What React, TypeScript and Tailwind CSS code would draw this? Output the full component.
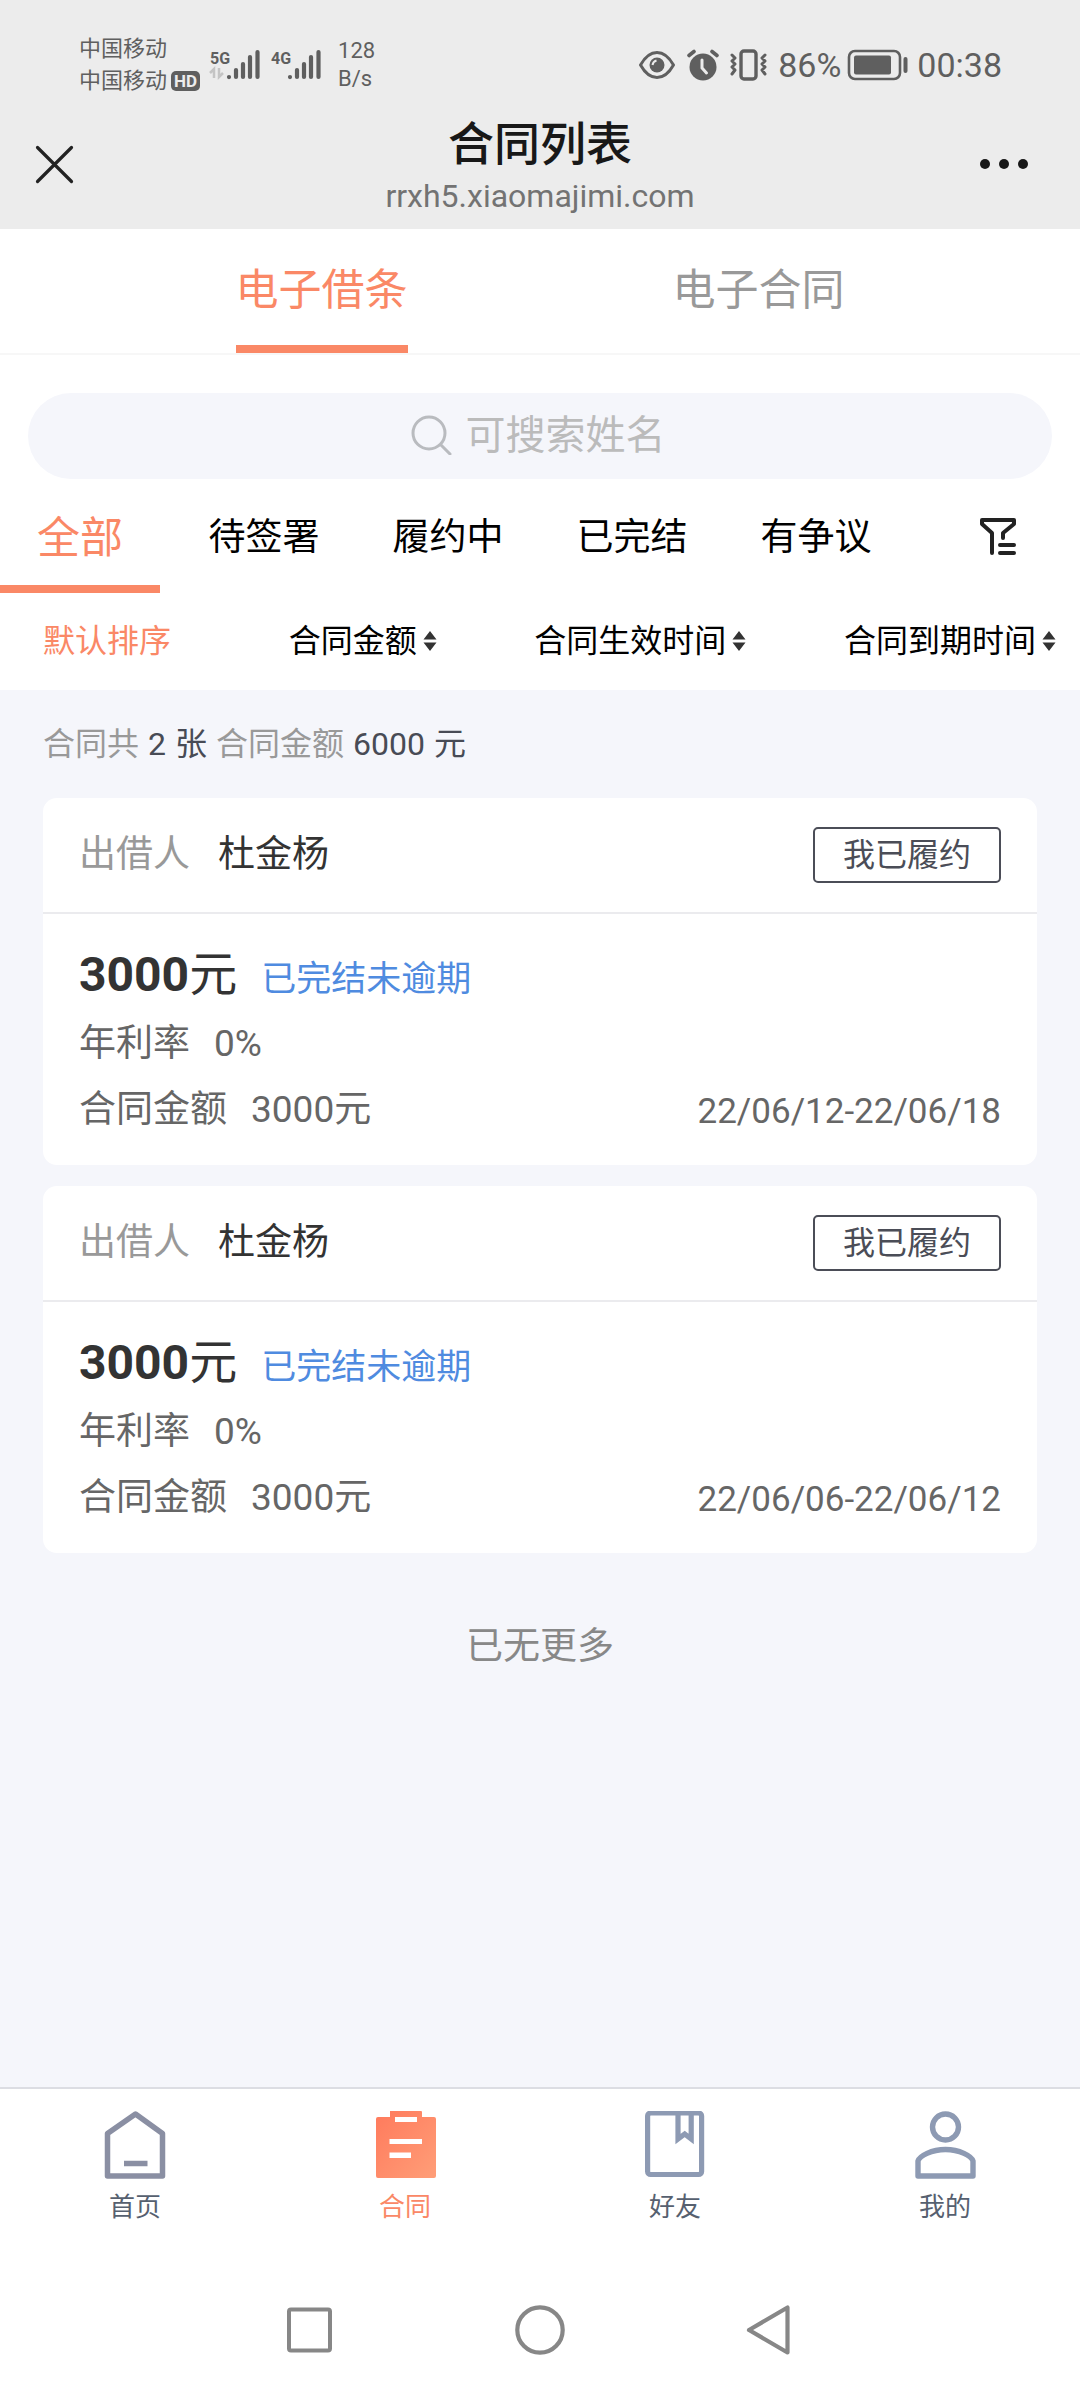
import { useState } from "react";
import type { ReactNode } from "react";

interface Contract {
	id: string;
	lender: string;
	amount: number;
	status: string;
	rate: string;
	period: string;
}

const KINDS = ["电子借条", "电子合同"];
const FILTERS = ["全部", "待签署", "履约中", "已完结", "有争议"];
const SORTS = ["默认排序", "合同金额", "合同生效时间", "合同到期时间"];

const CONTRACTS: Contract[] = [
	{ id: "c1", lender: "杜金杨", amount: 3000, status: "已完结未逾期", rate: "0%", period: "22/06/12-22/06/18" },
	{ id: "c2", lender: "杜金杨", amount: 3000, status: "已完结未逾期", rate: "0%", period: "22/06/06-22/06/12" },
];

export default function App() {
	const [kind, setKind] = useState(KINDS[0]);
	const [filter, setFilter] = useState(FILTERS[0]);
	const [sort, setSort] = useState(SORTS[0]);
	const total = CONTRACTS.reduce((sum, c) => sum + c.amount, 0);

	return (
		<div className="flex min-h-screen flex-col bg-[#f5f6fb] font-['Roboto','Noto_Sans_CJK_SC',sans-serif] text-[#333333]">
			<header className="bg-[#ececec]">
				<StatusBar />
				<TitleBar />
			</header>

			<div className="bg-white">
				<nav className="flex border-b-2 border-[#f7f7f7] px-[103px]">
					{KINDS.map((k) => (
						<div key={k} className="flex flex-1 justify-center">
							<button
								type="button"
								onClick={() => setKind(k)}
								className={`h-[124px] border-b-8 pt-1.5 text-[43px] ${k === kind ? "border-[#fa8866] text-[#fa8866]" : "border-transparent text-[#999999]"}`}
							>
								{k}
							</button>
						</div>
					))}
				</nav>

				<div className="px-7 pt-[38px]">
					<label className="flex h-[86px] items-center justify-center gap-3.5 rounded-full bg-[#f5f6fb] pr-1 pb-1">
						<svg className="size-[41px]" viewBox="0 0 41 41" fill="none" stroke="#b9bbbf" strokeWidth="3" strokeLinecap="round">
							<circle cx="18" cy="19" r="16" />
							<path d="M30 31l9 9" />
						</svg>
						<input
							type="text"
							aria-label="可搜索姓名"
							placeholder="可搜索姓名"
							className="w-[200px] bg-transparent pt-1 text-[40px] leading-[60px] outline-none placeholder:text-[#bbbbbb]"
						/>
					</label>
				</div>

				<div className="flex items-center justify-between pr-[62px]">
					<nav className="flex gap-6">
						{FILTERS.map((f) => (
							<button
								key={f}
								type="button"
								onClick={() => setFilter(f)}
								className={`h-[114px] w-40 border-b-8 pt-3 ${f === filter ? "border-[#fa8866] text-[43px] text-[#fa8866]" : "border-transparent text-[37px] text-black"}`}
							>
								{f}
							</button>
						))}
					</nav>
					<button type="button" aria-label="筛选">
						<svg className="h-[40px] w-[40px]" viewBox="0 0 40 40" fill="none" stroke="#222222" strokeWidth="4" strokeLinecap="round" strokeLinejoin="round">
							<path d="M14 37V17L4 8V4h32v4L25 17v5" />
							<path d="M22 29h14M22 37h14" />
						</svg>
					</button>
				</div>

				<div className="flex h-[97px] items-center justify-between pr-6 pb-0.5 pl-[43px] text-[32px]">
					{SORTS.map((s, i) => (
						<button
							key={s}
							type="button"
							onClick={() => setSort(s)}
							className={`flex items-center gap-1.5 whitespace-nowrap ${s === sort ? "text-[#fa8866]" : "text-black"}`}
						>
							{s}
							<svg className={`h-5 w-3.5 ${i === 0 ? "invisible" : ""}`} viewBox="0 0 14 20" fill="#333333">
								<path d="M7 0l6.500 8.500h-13zM7 20l6.500-8.500h-13z" />
							</svg>
						</button>
					))}
				</div>
			</div>

			<main className="flex-1 px-[43px]">
				<p className="flex h-[108px] items-center gap-[9px] text-[32px] text-[#999999]">
					<span>合同共</span>
					<span className="text-[#484b55]">{CONTRACTS.length}</span>
					<span className="text-[#484b55]">张</span>
					<span>合同金额</span>
					<span className="text-[#484b55]">{total}</span>
					<span className="text-[#484b55]">元</span>
				</p>
				<div className="flex flex-col gap-[21px]">
					{CONTRACTS.map((c) => (
						<ContractCard key={c.id} contract={c} />
					))}
				</div>
				<p className="mt-[66px] text-center text-[37px] leading-[56px] text-[#888888]">已无更多</p>
			</main>

			<footer className="border-t-2 border-[#dcdde3] bg-white">
				<nav className="grid grid-cols-4 pt-[22px]">
					<TabItem label="首页" tone="text-[#56606f]">
						<g fill="none" stroke="#8a8fa3" strokeWidth="5.500" strokeLinejoin="round">
							<path d="M6.500 22.500L34.500 3l27 19.500V65h-55z" />
							<path d="M23 52.500h23.500" />
						</g>
					</TabItem>
					<TabItem label="合同" tone="text-[#fa8866]">
						<defs>
							<linearGradient id="clip" x1="0" y1="0" x2="1" y2="1">
								<stop offset="0" stopColor="#ff7a5c" />
								<stop offset="1" stopColor="#ff9e78" />
							</linearGradient>
						</defs>
						<path
							fill="url(#clip)"
							fillRule="evenodd"
							d="M19 0h31q1 0 1 1v5h12q2 0 2 2v57q0 2-2 2H7q-2 0-2-2V8q0-2 2-2h12V1q0-1 0-1zM24 6v5h22V6zM18.500 28v5h32.500v-5zM18.500 41.500v5.500h21.500v-5.500z"
						/>
					</TabItem>
					<TabItem label="好友" tone="text-[#56606f]">
						<g fill="none" stroke="#8d9ab3" strokeWidth="5.200">
							<rect x="6.600" y="2" width="54" height="61.500" rx="3" />
							<path d="M37 2v26l6.700-5 6.500 5V2" />
						</g>
					</TabItem>
					<TabItem label="我的" tone="text-[#56606f]">
						<g fill="none" stroke="#8d9ab3" strokeWidth="5.400" strokeLinejoin="round">
							<circle cx="34.500" cy="16" r="13" />
							<path d="M7 65V50c1.500-5 13.500-11.500 27.500-11.500S60.500 45 62 50v15z" />
						</g>
					</TabItem>
				</nav>
				<SystemNav />
			</footer>
		</div>
	);
}

function ContractCard({ contract }: { contract: Contract }) {
	return (
		<article className="rounded-[14px] bg-white">
			<div className="flex h-[116px] items-center justify-between border-b-2 border-[#ebebee] px-9">
				<div className="flex gap-7 text-[37px]">
					<span className="text-[#999999]">出借人</span>
					<span>{contract.lender}</span>
				</div>
				<button type="button" className="h-14 rounded-[5px] border-2 border-[#4b4d57] px-7 text-[32px] leading-none text-[#4b4d57]">
					我已履约
				</button>
			</div>
			<div className="px-9 pt-7 pb-[22px] text-[37px] text-[#666666]">
				<div className="flex h-[69px] items-baseline gap-6 leading-[66px]">
					<strong className="text-[48px] font-bold text-[#333333]">
						{contract.amount}
						<span className="font-normal">元</span>
					</strong>
					<span className="text-[35px] text-[#4f8be0]">{contract.status}</span>
				</div>
				<div className="flex h-[66px] items-center gap-6">
					<span>年利率</span>
					<span>{contract.rate}</span>
				</div>
				<div className="flex h-[66px] items-center justify-between">
					<div className="flex gap-6">
						<span>合同金额</span>
						<span>{contract.amount}元</span>
					</div>
					<span className="pt-1 text-[35px]">{contract.period}</span>
				</div>
			</div>
		</article>
	);
}

function TabItem({ label, tone, children }: { label: string; tone: string; children: ReactNode }) {
	return (
		<a href="#" className={`flex flex-col items-center gap-2.5 text-[26px] leading-9 ${tone}`}>
			<svg className="size-[68px]" viewBox="0 0 68 68">
				{children}
			</svg>
			{label}
		</a>
	);
}

function TitleBar() {
	return (
		<div className="flex items-center justify-between px-[34px] pt-[19px] pb-[9px]">
			<button type="button" aria-label="关闭" className="w-[64px] pb-2">
				<svg className="size-[40px]" viewBox="0 0 40 40" fill="none" stroke="#222222" strokeWidth="3.200" strokeLinecap="round">
					<path d="M3.500 3.500l34 34M37.500 3.500l-34 34" />
				</svg>
			</button>
			<div className="text-center">
				<h1 className="text-[46px] leading-[56px] font-medium text-[#181818]">合同列表</h1>
				<div className="text-[32px] leading-[48px] text-[#737373]">rrxh5.xiaomajimi.com</div>
			</div>
			<button type="button" aria-label="更多" className="flex w-[64px] justify-end gap-[9px] pr-[18px] pb-2">
				<i className="size-2.5 shrink-0 rounded-full bg-[#181818]" />
				<i className="size-2.5 shrink-0 rounded-full bg-[#181818]" />
				<i className="size-2.5 shrink-0 rounded-full bg-[#181818]" />
			</button>
		</div>
	);
}

function Signal({ label, arrows }: { label: string; arrows?: boolean }) {
	return (
		<svg className="h-8 w-[51px] overflow-visible" viewBox="0 0 51 32">
			<text x="0" y="15" fontSize="16" fontWeight="700" fill="#5f5f5f" className="font-['Roboto',sans-serif]">
				{label}
			</text>
			{arrows ? (
				<path d="M0 24l4-4v9M9 19v9l4-4" fill="none" stroke="#c4c4c4" strokeWidth="2.500" />
			) : null}
			<path d="M19 28v.1M26 28v-7M33 28V15M40 28V8M47.500 28V3" stroke="#5f5f5f" strokeWidth="4.200" strokeLinecap="round" />
		</svg>
	);
}

function StatusBar() {
	return (
		<div className="flex h-[97px] items-center justify-between pt-[33px] pr-[78px] pl-[79px] text-[#5f5f5f]">
			<div className="flex items-center text-[22px] leading-8">
				<div>
					<div>中国移动</div>
					<div className="flex items-center gap-1">
						中国移动
						<span className="flex h-5 w-[29px] items-center justify-center rounded-[5px] bg-[#5f5f5f] text-[17px] font-bold text-[#ececec]">HD</span>
					</div>
				</div>
				<div className="ml-2.5 flex gap-2.5">
					<Signal label="5G" arrows />
					<Signal label="4G" />
				</div>
				<div className="ml-4 leading-7">
					<div>128</div>
					<div>B/s</div>
				</div>
			</div>
			<div className="flex items-center text-[34px] leading-none">
				<svg className="h-8 w-[38px]" viewBox="0 0 38 32" fill="none" stroke="#5f5f5f" strokeWidth="3">
					<path d="M2.500 16C7 8 13 3.500 19 3.500S31 8 35.500 16C31 24 25 28.500 19 28.500S7 24 2.500 16z" strokeLinejoin="round" />
					<circle cx="19" cy="16" r="7.500" fill="#5f5f5f" stroke="none" />
					<path d="M14.500 16q.5-3.500 4-4.500" stroke="#ececec" strokeWidth="2" />
				</svg>
				<svg className="ml-2.5 h-8 w-[34px]" viewBox="0 0 34 32" fill="none" stroke="#5f5f5f" strokeLinecap="round">
					<circle cx="17" cy="18" r="13.500" fill="#5f5f5f" stroke="none" />
					<path d="M3 6.500L8 2.500M26 2.500l5 4" strokeWidth="3.600" />
					<path d="M16 11v8l4.500 5" stroke="#ececec" strokeWidth="3" />
				</svg>
				<svg className="ml-2 h-8 w-[42px]" viewBox="0 0 42 32" fill="none" stroke="#5f5f5f" strokeLinecap="round" strokeLinejoin="round">
					<rect x="13" y="2" width="15" height="28" rx="3" strokeWidth="3.400" />
					<path d="M4 6l3 3-3 3 3 3-3 3 3 3-3 4M37 6l-3 3 3 3-3 3 3 3-3 3 3 4" strokeWidth="3" />
				</svg>
				<span className="ml-2">86%</span>
				<svg className="ml-1.5 h-8 w-[62px]" viewBox="0 0 62 32" fill="none" stroke="#5f5f5f">
					<rect x="2" y="2" width="51" height="28" rx="6" strokeWidth="2.600" />
					<rect x="7" y="6.500" width="37" height="19" rx="2" fill="#5f5f5f" stroke="none" />
					<path d="M58.500 10v12" strokeWidth="4" strokeLinecap="round" />
				</svg>
				<span className="ml-2">00:38</span>
			</div>
		</div>
	);
}

function SystemNav() {
	return (
		<div className="flex justify-center gap-[180px] pt-20 pb-[33px]">
			<button type="button" aria-label="最近任务">
				<svg className="size-[50px]" viewBox="0 0 50 50" fill="none" stroke="#878787" strokeWidth="4">
					<rect x="4" y="4.500" width="41" height="41" rx="2" />
				</svg>
			</button>
			<button type="button" aria-label="主屏幕">
				<svg className="size-[50px]" viewBox="0 0 50 50" fill="none" stroke="#878787" strokeWidth="4.200">
					<circle cx="25" cy="25" r="22.700" />
				</svg>
			</button>
			<button type="button" aria-label="返回">
				<svg className="size-[50px]" viewBox="0 0 50 50" fill="none" stroke="#878787" strokeWidth="4.200" strokeLinejoin="round">
					<path d="M42.500 2.500v45L4 25z" />
				</svg>
			</button>
		</div>
	);
}
